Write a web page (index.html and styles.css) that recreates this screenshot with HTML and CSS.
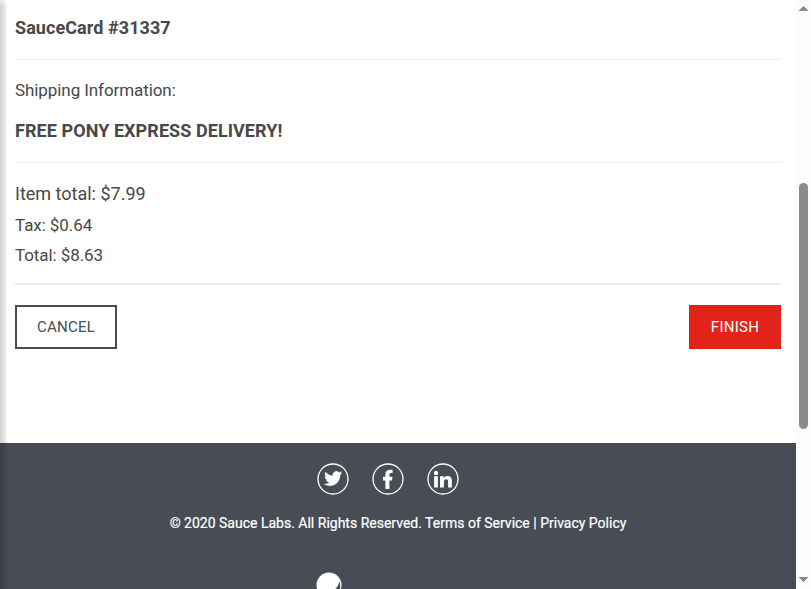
FILE: index.html
```html
<!DOCTYPE html>
<html lang="en">
<head>
<meta charset="utf-8">
<title>Checkout: Overview</title>
<link rel="stylesheet" href="styles.css">
</head>
<body>
<div class="viewport">
  <div class="page">
    <main class="summary">
      <div class="value payment"><span>SauceCard #31337</span></div>
      <div class="label shipping-label"><span>Shipping Information:</span></div>
      <div class="value shipping"><span>FREE PONY EXPRESS DELIVERY!</span></div>
      <div class="subtotal"><span>Item total: $7.99</span></div>
      <div class="label tax"><span>Tax: $0.64</span></div>
      <div class="label total"><span>Total: $8.63</span></div>
      <div class="actions">
        <button class="btn cancel"><span>CANCEL</span></button>
        <button class="btn finish"><span>FINISH</span></button>
      </div>
    </main>
    <footer class="footer">
      <div class="social">
        <svg width="32" height="32" viewBox="0 0 32 32"><circle cx="16" cy="16" r="15" fill="none" stroke="#fff" stroke-width="1.3"/><path transform="translate(7.3 6.8) scale(.73)" fill="#fff" stroke="#fff" stroke-width=".5" d="M23.95 4.57a10 10 0 0 1-2.82.77 4.96 4.96 0 0 0 2.16-2.72c-.95.55-2 .95-3.13 1.18a4.92 4.92 0 0 0-8.38 4.48C7.69 8.09 4.07 6.13 1.64 3.16a4.82 4.82 0 0 0-.67 2.48c0 1.71.87 3.21 2.19 4.1a4.9 4.9 0 0 1-2.23-.62v.06a4.92 4.92 0 0 0 3.95 4.83 5 5 0 0 1-2.21.08 4.94 4.94 0 0 0 4.6 3.42A9.87 9.87 0 0 1 0 19.54a13.99 13.99 0 0 0 7.55 2.21c9.05 0 14-7.5 14-13.98 0-.21 0-.42-.02-.63a9.94 9.94 0 0 0 2.42-2.57z"/></svg>
        <svg width="32" height="32" viewBox="0 0 32 32"><circle cx="16" cy="16" r="15" fill="none" stroke="#fff" stroke-width="1.3"/><path fill="#fff" d="M13.4 26v-8.6H11v-3.7h2.4v-2.4c0-3 1.9-4.6 4.7-4.6 1.3 0 2.5.1 2.5.1v3.1h-1.4c-1.4 0-1.8.8-1.8 1.7v2.1h3.1l-.5 3.7h-2.6V26z"/></svg>
        <svg width="32" height="32" viewBox="0 0 32 32"><circle cx="16" cy="16" r="15" fill="none" stroke="#fff" stroke-width="1.3"/><circle cx="9" cy="10" r="2.2" fill="#fff"/><path fill="#fff" d="M7.1 13.3h3.8v11.3H7.1zM13 13.3h3.7v1.6c.6-1.1 1.9-1.9 3.6-1.9 3.8 0 4.6 2.4 4.6 5.5v6.1h-3.8v-5.5c0-1.3 0-2.9-1.8-2.9s-2.4 1.4-2.4 2.8v5.6H13z"/></svg>
      </div>
      <div class="copy"><span>© 2020 Sauce Labs. All Rights Reserved. Terms of Service | Privacy Policy</span></div>
      <svg class="bot" width="26" height="17" viewBox="0 0 26 17"><circle cx="13" cy="13" r="12.5" fill="#fff"/><path d="M23.3 9c-.3 3.2-1.7 6-4 8h4.7c.5-2.6.3-5.3-.7-8z" fill="#474c55"/></svg>
    </footer>
    <div class="edge-shadow"></div>
  </div>
  <div class="scrollbar">
    <svg class="up" width="9" height="5"><path d="M4 0h1v1h1v1h1v1h1v1h1v1H0V4h1V3h1V2h1V1h1z" fill="#8b8b8b"/></svg>
    <div class="thumb"></div>
    <svg class="down" width="9" height="5"><path d="M0 0h9v1H8v1H7v1H6v1H5v1H4V4H3V3H2V2H1V1H0z" fill="#8b8b8b"/></svg>
  </div>
</div>
</body>
</html>
```
FILE: styles.css
```css
* { box-sizing: border-box; }
body { margin: 0; overflow: hidden; background: #fff; color: #484848; font-family: Roboto, "Liberation Sans", sans-serif; }
.viewport { display: flex; height: 589px; overflow: hidden; }
.page { position: relative; display: flex; flex-direction: column; width: 796px; }
.summary { height: 443px; padding: 0 15px; background: #fff; }
.value { font-size: 18px; font-weight: 700; line-height: 22px; letter-spacing: .07px; border-bottom: 1px solid #ededed; }
.payment { height: 60px; padding-top: 17px; }
.label { font-size: 17px; line-height: 20px; letter-spacing: -.08px; }
.shipping-label { height: 60px; padding-top: 20px; }
.shipping { height: 43px; }
.subtotal { height: 52px; padding-top: 20px; font-size: 18px; line-height: 22px; }
.tax { height: 30px; }
.total { height: 40px; border-bottom: 2px solid #ededed; }
.actions { display: flex; justify-content: space-between; padding-top: 20px; }
.btn { height: 44px; padding: 0; font: 400 15px/20px Roboto, sans-serif; letter-spacing: .25px; border-radius: 0; }
.cancel { width: 102px; color: #474c55; background: #fff; border: 2px solid #474c55; }
.finish { width: 92px; color: #fff; background: #e2231a; border: 0; }
.footer { flex: 1; display: flex; flex-direction: column; align-items: center; padding-top: 20px; background: #474c55; color: #fff; }
.social { display: flex; gap: 23px; margin-right: 20px; }
.copy { height: 77px; padding-top: 18px; font-size: 14px; line-height: 20px; -webkit-text-stroke: .2px #fff; }
.bot { margin-right: 138px; flex: none; }
.edge-shadow { position: absolute; left: 0; top: 0; bottom: 0; width: 8px; background: linear-gradient(90deg, rgba(0,0,0,.18), rgba(0,0,0,.12) 45%, rgba(0,0,0,0)); -webkit-mask-image: linear-gradient(rgba(0,0,0,.4), #000 6px); mask-image: linear-gradient(rgba(0,0,0,.4), #000 6px); }
.scrollbar { display: flex; flex-direction: column; align-items: center; width: 15px; background: #fcfcfc; }
.up { margin-top: 6px; flex: none; }
.thumb { width: 9px; height: 246px; margin-top: 172px; border-radius: 5px; background: #8b8b8b; }
.down { margin-top: auto; margin-bottom: 7px; }
```
